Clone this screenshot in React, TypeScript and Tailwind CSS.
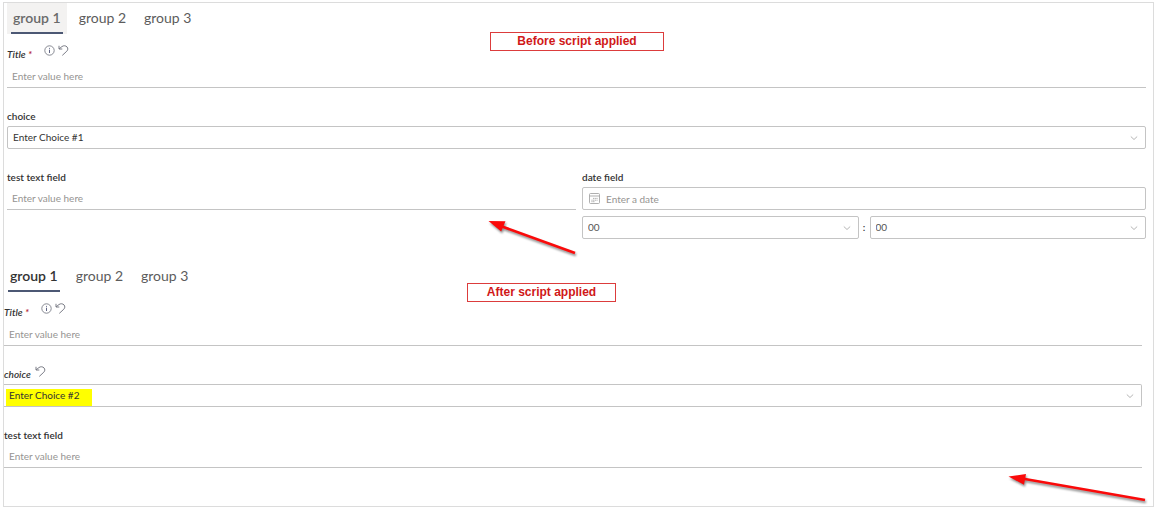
import React, { useId, useState } from 'react';
import clsx from 'clsx';

const GROUPS = ['group 1', 'group 2', 'group 3'];

const lineInput =
  'block w-full h-[23px] px-[5px] border-b border-[#c4c4c4] bg-transparent text-[10px] text-[#444] placeholder:text-[#969492] focus:outline-none';
const box = 'relative h-[23px] border border-[#c4c4c4] rounded-xs';

function UndoIcon() {
  return (
    <svg width="11" height="11" viewBox="0 0 11 11" fill="none" stroke="#6b6d78" strokeWidth="0.9">
      <path d="M1 0.8V4H4.3M1.2 3.8L3.9 1.6C5.6 0.3 7.8 0.6 9 1.9C10.2 3.3 10 5 8.8 6.2L4.3 10.4" />
    </svg>
  );
}

function InfoIcon() {
  return (
    <svg width="11" height="11" viewBox="0 0 11 11" fill="none" stroke="#6b6d78" strokeWidth="0.8">
      <circle cx="5.5" cy="5.5" r="4.7" />
      <path d="M5.5 4.7V8M5.5 2.9V3.8" stroke="#4d5275" strokeWidth="0.9" />
    </svg>
  );
}

function Chevron() {
  return (
    <svg
      className="absolute right-[7px] top-[7px] pointer-events-none"
      width="8"
      height="8"
      viewBox="0 0 8 8"
      fill="none"
      stroke="#b5b5b5"
    >
      <path d="M0.8 2.5L4 5.5L7.2 2.5" />
    </svg>
  );
}

function CalendarIcon() {
  return (
    <svg width="11" height="11" viewBox="0 0 11 11" fill="none" stroke="#a6a6a6" strokeWidth="0.9" className="shrink-0">
      <rect x="0.5" y="0.5" width="10" height="10" rx="1" />
      <path d="M0.5 3H10.5" />
      <path d="M4 5.4H8.6M2.4 7.2H8.6M2.4 8.7H6" strokeDasharray="1.2 0.5" />
    </svg>
  );
}

function Tabs({ hovered }: { hovered?: boolean }) {
  const [active, setActive] = useState(0);
  return (
    <div role="tablist" className="flex gap-1.5 h-[31px]">
      {GROUPS.map((g, i) => (
        <button
          key={g}
          type="button"
          role="tab"
          aria-selected={i === active}
          onClick={() => setActive(i)}
          className={clsx(
            'relative px-1.5 text-[14px] leading-4 pb-px',
            i === active ? 'font-semibold' : 'text-[#5c5c5c]',
            i === active && (hovered ? 'bg-[#f3f2f1] text-[#6a6a6a]' : 'text-[#333]'),
          )}
        >
          {g}
          {i === active && <span className="absolute bottom-0 inset-x-1 h-0.5 bg-[#4c5874]" />}
        </button>
      ))}
    </div>
  );
}

function Label({ id, text, changed }: { id: string; text: string; changed?: boolean }) {
  return (
    <div className="flex items-center h-[17px] mb-px">
      <label htmlFor={id} className={clsx('text-[10px] font-semibold', changed && 'italic')}>
        {text}
      </label>
      {changed && (
        <button type="button" aria-label="Undo" className="ml-1 mb-1.5">
          <UndoIcon />
        </button>
      )}
    </div>
  );
}

function TitleField() {
  const id = useId();
  return (
    <div className="mt-2.5">
      <div className="flex items-center h-5 mb-px">
        <label htmlFor={id} className="text-[10px] font-semibold italic">
          Title <span className="text-[#b3262e]">*</span>
        </label>
        <div className="flex gap-[3px] ml-3 mb-2">
          <button type="button" aria-label="Info">
            <InfoIcon />
          </button>
          <button type="button" aria-label="Undo">
            <UndoIcon />
          </button>
        </div>
      </div>
      <input id={id} placeholder="Enter value here" className={lineInput} />
    </div>
  );
}

function TextField({ label }: { label: string }) {
  const id = useId();
  return (
    <div>
      <Label id={id} text={label} />
      <input id={id} placeholder="Enter value here" className={lineInput} />
    </div>
  );
}

function ChoiceField({ value, changed }: { value: string; changed?: boolean }) {
  const id = useId();
  return (
    <div className="mt-5">
      <Label id={id} text="choice" changed={changed} />
      <div className={clsx(box, changed && 'border-l-0 rounded-l-none')}>
        {changed && <span className="absolute left-0.5 top-1 bottom-0 w-[86px] bg-[#ffff00]" />}
        <select id={id} defaultValue={value} className="relative block appearance-none w-full h-full px-[5px] text-[10px]">
          <option>Enter Choice #1</option>
          <option>Enter Choice #2</option>
        </select>
        <Chevron />
      </div>
    </div>
  );
}

function TimeSelect({ label }: { label: string }) {
  return (
    <div className={clsx(box, 'flex-1')}>
      <select aria-label={label} className="block appearance-none w-full h-full px-[5px] text-[10px] text-[#555]">
        <option>00</option>
      </select>
      <Chevron />
    </div>
  );
}

function DateField() {
  const id = useId();
  return (
    <div>
      <Label id={id} text="date field" />
      <div className={clsx(box, 'flex items-center gap-1.5 pl-1.5')}>
        <CalendarIcon />
        <input
          id={id}
          placeholder="Enter a date"
          className="w-full h-full text-[10px] placeholder:text-[#969492] focus:outline-none"
        />
      </div>
      <div className="flex items-center mt-1.5">
        <TimeSelect label="hours" />
        <span className="w-[11px] text-center text-[10px] font-semibold">:</span>
        <TimeSelect label="minutes" />
      </div>
    </div>
  );
}

const callout =
  'absolute h-[19px] border border-[#dc3c3c] bg-white text-center text-[12px] leading-[17px] font-bold text-[#d01818] font-["Liberation_Sans",sans-serif]';
const arrow = 'absolute pointer-events-none drop-shadow-[1px_2px_1px_rgba(0,0,0,0.45)]';

export default function App() {
  return (
    <div className='bg-white pt-0.5 pl-[3px] pr-[7px] pb-2 text-[#333] font-["Lato","Open_Sans",sans-serif]'>
      <div className="relative border border-[#dcdcdc] pb-[38px]">
        {/* Before */}
        <section className="pl-[3px] pr-[7px]">
          <Tabs hovered />
          <TitleField />
          <ChoiceField value="Enter Choice #1" />
          <div className="mt-5 grid grid-cols-[569fr_564fr] gap-1.5">
            <TextField label="test text field" />
            <DateField />
          </div>
        </section>

        {/* After */}
        <section className="mt-[22px] pr-[11px]">
          <Tabs />
          <TitleField />
          <ChoiceField value="Enter Choice #2" changed />
          <div className="mt-5">
            <TextField label="test text field" />
          </div>
        </section>

        {/* Annotations */}
        <div className={clsx(callout, 'left-[486px] top-[29px] w-[174px]')}>Before script applied</div>
        <div className={clsx(callout, 'left-[463px] top-[280px] w-[149px]')}>After script applied</div>
        <svg className={clsx(arrow, 'left-[484px] top-[217px]')} width="92" height="38" viewBox="0 0 92 38">
          <path d="M14 6.5L87 33" stroke="#fa0a0a" strokeWidth="2.6" />
          <path d="M0.5 1L17.5 1.2L13.2 11.6Z" fill="#fa0a0a" />
        </svg>
        <svg className={clsx(arrow, 'left-[1004px] top-[470px]')} width="142" height="32" viewBox="0 0 142 32">
          <path d="M14 5.5L137 27" stroke="#fa0a0a" strokeWidth="2.6" />
          <path d="M0.5 3.5L18 1L16 11.8Z" fill="#fa0a0a" />
        </svg>
      </div>
    </div>
  );
}
